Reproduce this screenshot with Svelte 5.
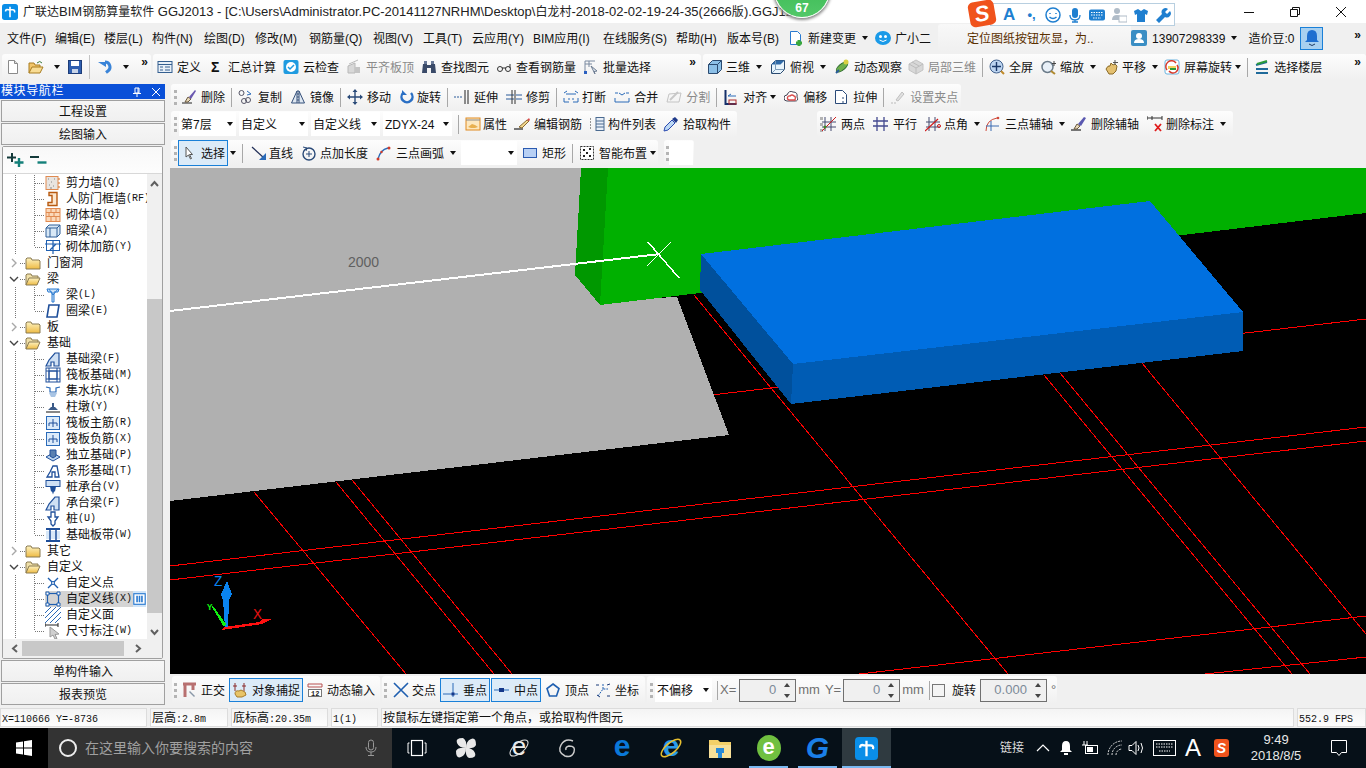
<script>
  const icons = {
    new: `<path d="M3.5 1.5h6l3 3v10h-9z" fill="#fff" stroke="#8a8a8a"/><path d="M9.5 1.5v3h3" fill="#ddd" stroke="#8a8a8a"/>`,
    open: `<path d="M1 14V4h5l1 2h5v2" fill="#f2c56a" stroke="#a87c20"/><path d="M1 14l3-6h11l-3 6z" fill="#f8dc94" stroke="#a87c20"/><path d="M9 4q3-3 5 0" fill="none" stroke="#3a7a3a"/>`,
    save: `<rect x="1.5" y="1.5" width="13" height="13" fill="#2f5fb0" stroke="#1c3c78"/><rect x="4" y="2" width="8" height="5" fill="#fff"/><rect x="5" y="10" width="6" height="4" fill="#c8d4e8"/>`,
    undo: `<path d="M8 3a5 5 0 0 1 3 9l-2 1.500" fill="none" stroke="#3a84d8" stroke-width="3"/><path d="M1 3h8v-1L9 8z" fill="#3a84d8"/>`,
    def: `<rect x="1" y="2.500" width="14" height="11" fill="#e8f0f8" stroke="#345f90"/><path d="M1 5.500h14M3 8h3M3 11h3M8 8h5M8 11h5" stroke="#345f90"/>`,
    sigma: `<text x="3" y="13" font-family="Liberation Sans" font-size="14" font-weight="700" fill="#111">Σ</text>`,
    cloud: `<rect x="0.500" y="1" width="15" height="14" rx="2" fill="#1f9be0"/><circle cx="8" cy="8" r="5" fill="#fff"/><path d="M5 8l2 2 4-4" fill="none" stroke="#1f9be0" stroke-width="1.500"/>`,
    flat: `<path d="M2 14V7l7-3v10z" fill="#d8d8d8" stroke="#b8b8b8"/><path d="M9 8h5v6H9z" fill="#c4c4c4"/><path d="M3 5l9-4" stroke="#bbb"/>`,
    find: `<path d="M2 5h4v9H1zM10 5h4l1 9h-5z" fill="#3a4a68"/><rect x="3" y="2" width="3" height="3" fill="#6a7a98"/><rect x="10" y="2" width="3" height="3" fill="#6a7a98"/><rect x="6" y="6" width="4" height="3" fill="#3a4a68"/>`,
    glasses: `<circle cx="4" cy="10" r="2.500" fill="none" stroke="#333"/><circle cx="12" cy="10" r="2.500" fill="none" stroke="#333"/><path d="M6 9h4M14 9V5" stroke="#333"/>`,
    batch: `<path d="M2 2h10M2 2v12M2 5h7M6 2v6" stroke="#7a8aa0" fill="none"/><rect x="1" y="12" width="3" height="3" fill="#2a5fc0"/><path d="M8 7l6 5-3 .5 1 2.500z" fill="#e8eef6" stroke="#6a7a90"/>`,
    cube: `<path d="M1.500 5.500l4-4h9v9l-4 4h-9z" fill="#8cc0e8" stroke="#2a4a70"/><path d="M1.500 5.500h9v9M10.500 5.500l4-4" fill="none" stroke="#2a4a70"/>`,
    cubetop: `<path d="M1.500 5.500l4-4h9v9l-4 4h-9z" fill="#e8f4fc" stroke="#2a4a70"/><path d="M1.500 5.500l4-4h9l-4 4z" fill="#2f6aa8"/><path d="M5.500 1.500v9h9M1.500 14.500l4-4" fill="none" stroke="#7a9ab8"/>`,
    orbit: `<ellipse cx="8" cy="8" rx="7" ry="3" transform="rotate(-40 8 8)" fill="#6fb04a" stroke="#2a6a2a"/><circle cx="12" cy="3" r="2.500" fill="#d8d040"/><path d="M2 14l3-3" stroke="#2a5a9a" stroke-width="2"/>`,
    part: `<path d="M8 1l7 4v6l-7 4-7-4V5z" fill="#d8d8d8" stroke="#c4c4c4"/><path d="M1 5l7 4 7-4M8 9v6M4 3l7 4" fill="none" stroke="#bcbcbc"/>`,
    full: `<circle cx="7.500" cy="7.500" r="6.500" fill="#bcd4f0" stroke="#40608c"/><path d="M7.500 3v9M3 7.500h9" stroke="#1a3868" stroke-width="1.400"/><path d="M12 12l3 3" stroke="#c08a2a" stroke-width="2"/>`,
    zoom: `<circle cx="6.500" cy="8" r="5.500" fill="#e8f0f8" stroke="#6a7a88" stroke-width="1.500"/><path d="M10 12l4 3" stroke="#b08a30" stroke-width="2"/><path d="M13 2v5M11 4.500h4" stroke="#444"/>`,
    pan: `<path d="M2 10q2-4 4-3l1-3 2 2 2-1 2 2-1 5-3 3H5z" fill="#e4c070" stroke="#8a6a28"/><path d="M11 1v5M9 3.500h5" stroke="#555"/>`,
    rot: `<rect x="1" y="1" width="14" height="14" rx="2" fill="#fff" stroke="#6ab4e0"/><path d="M3 11a5.500 5.500 0 0 1 9-7" fill="none" stroke="#d83a2a" stroke-width="1.500"/><path d="M13 6a5 5 0 0 1-8 6" fill="none" stroke="#d83a2a" stroke-width="1.500"/><rect x="4" y="7" width="8" height="3" fill="#f2d060"/><path d="M6 10h6" stroke="#2a9a3a" stroke-width="2"/>`,
    floors: `<path d="M2 6l11-3M2 10h12M2 14h12" stroke="#1f6a9a" stroke-width="2"/><path d="M3 5l10-3" stroke="#2a9a3a" stroke-width="2"/>`,
    del: `<path d="M1 14h10" stroke="#222"/><path d="M4 13l3-5 3 2-3 3z" fill="#e8d8b8" stroke="#6a5a40"/><path d="M8 8l6-7 1 1-5 8z" fill="#6a58b0"/>`,
    copy: `<circle cx="3.500" cy="4" r="2.500" fill="none" stroke="#556"/><circle cx="10" cy="11" r="2.500" fill="none" stroke="#556"/><circle cx="6" cy="12" r="2.500" fill="none" stroke="#556"/><path d="M9 2l4 3-4 1" fill="none" stroke="#2a6ab8"/>`,
    mirror: `<path d="M7 2L1.500 14H7zM9 2l5.500 12H9z" fill="#dfe8f2" stroke="#35507a"/><path d="M8 1v14" stroke="#35507a" stroke-dasharray="2 1"/>`,
    move: `<path d="M8 1v14M1 8h14" stroke="#2a4a78" stroke-width="1.400"/><path d="M8 0l2.500 3h-5zM8 16l2.500-3h-5zM0 8l3-2.500v5zM16 8l-3-2.500v5z" fill="#2a4a78"/>`,
    rotate: `<path d="M4 4a5.500 5.500 0 1 0 8 0" fill="none" stroke="#2a6fc4" stroke-width="2.500"/><path d="M3 1v5h5z" fill="#2a6fc4"/>`,
    extend: `<path d="M0 8h9" stroke="#2a5a9a" stroke-dasharray="2 1"/><path d="M11 1v14M14 1v14" stroke="#222"/>`,
    trim: `<path d="M0 6h8M0 10h8M10 6h6M10 10h6" stroke="#2a5a9a"/><path d="M6 1v14M9 1v14" stroke="#333"/>`,
    break: `<path d="M1 9v4h5M10 13h5V9M1 4l3-2M15 4l-3-2M3 5h10" fill="none" stroke="#2a6ab8"/><path d="M5 10h2M9 10h2" stroke="#2a6ab8"/>`,
    merge: `<path d="M1 9v4h14V9M5 4l3 2 3-2M1 4h3M12 4h3" fill="none" stroke="#2a6ab8"/>`,
    split: `<path d="M1 13h12l2-9-12 1z" fill="none" stroke="#c4c4c4"/><path d="M4 11l8-8" stroke="#c8c8c8" stroke-width="2"/>`,
    align: `<path d="M2.500 1v14h11" fill="none" stroke="#15306a" stroke-width="2"/><rect x="6" y="11" width="7" height="4" fill="none" stroke="#b02a2a"/><path d="M5 7h8M5 7l3-2" stroke="#2a6ab8"/>`,
    offset: `<path d="M3 12a3 3 0 0 1 0-6q2-5 6-3 5 0 4 5 2 4-2 4z" fill="#fff" stroke="#445"/><path d="M5 11a2 2 0 0 1 1-4q2-2 4 0 2 0 1 4z" fill="none" stroke="#d84a4a" stroke-width="1.300"/>`,
    stretch: `<path d="M2.500 1.500h7l4 4v9h-11z" fill="#fff" stroke="#2a4a78"/><path d="M10 8v2M10 12v2" stroke="#2a4a78"/>`,
    setgrip: `<path d="M1 14h5" stroke="#bbb" stroke-dasharray="2 1"/><path d="M6 11l6-8 2 2-6 7z" fill="#e0e0e0" stroke="#c0c0c0"/>`,
    prop: `<rect x="1" y="2" width="14" height="12" fill="#fde8c0" stroke="#e08a20"/><path d="M1 4h14" stroke="#8a8a8a"/><path d="M3 11l4-3 3 1 3 2-3 1H6z" fill="#e8b050"/>`,
    rebar: `<path d="M0 13h9" stroke="#222" stroke-width="1.200"/><path d="M5 11l8-7 2 1-7 7z" fill="#f2d890" stroke="#8a6a30"/><path d="M13 4l2-2 1 2-1 1z" fill="#d84a4a"/>`,
    list: `<path d="M1 3h2M1 6h2M1 9h2M1 12h2" stroke="#333" stroke-dasharray="1 1"/><rect x="7" y="1.500" width="8" height="13" fill="#e8eff8" stroke="#4a6a90"/><path d="M7 5h8M7 8h8M7 11h8" stroke="#4a6a90"/>`,
    pick: `<path d="M1 15l1-4 7-7 3 3-7 7z" fill="#bcd8f4" stroke="#2a4ab0"/><path d="M9 3l3-2 3 3-2 3z" fill="#1f3a8a"/>`,
    two: `<path d="M4 1v14M10 1v14M1 6h14M1 11h14" stroke="#444a70"/><path d="M1 15L15 1" stroke="#d01a1a"/><circle cx="4" cy="11" r="1.500" fill="#3a8a2a"/>`,
    par: `<path d="M4 1v14M11 1v14M0 5h15M0 10h15" stroke="#444a90" stroke-width="1.300"/>`,
    angle: `<path d="M4 1v14M10 1v14M1 6h14M1 11h14" stroke="#444a70"/><path d="M0 15L13 3" stroke="#d01a1a" stroke-width="1.200"/><circle cx="14" cy="10" r="1.500" fill="none" stroke="#d01a1a"/>`,
    arc3: `<path d="M1 15Q1 4 12 2" fill="none" stroke="#d04a3a"/><path d="M6 5v10M1 10h13" stroke="#3a6ab0"/><circle cx="13" cy="2" r="1.300" fill="#d04a3a"/>`,
    delaux: `<path d="M0 14h10" stroke="#222" stroke-width="1.200"/><path d="M3 13l3-5 3 2-3 3z" fill="#e8d8b8" stroke="#6a5a40"/><path d="M7 8l6-7 2 1-5 8z" fill="#5a58b0"/>`,
    delmark: `<path d="M0 2h15M0 0v4M15 0v4M5 0v4" stroke="#333" fill="none"/><path d="M8 8l6 7M14 8l-6 7" stroke="#e01a1a" stroke-width="1.800"/>`,
    sel: `<path d="M5 2v10l2.500-2 2 4 1-.5-2-4h3z" fill="#fff" stroke="#555"/>`,
    line: `<path d="M1 2l12 11" stroke="#222f58" stroke-width="1.200"/><path d="M15 8v7H8z" fill="#2a6ab8"/>`,
    plen: `<circle cx="8" cy="9" r="6" fill="none" stroke="#2a4a78" stroke-width="1.400"/><path d="M8 6v6M5 9h6" stroke="#2a4a78"/><path d="M2 2l4 1-1 3" fill="none" stroke="#2a4a78"/>`,
    arc: `<path d="M2 14Q4 5 12 3" fill="none" stroke="#2a6ab8" stroke-width="1.300"/><circle cx="2" cy="14" r="1.500" fill="#d03a2a"/><circle cx="13" cy="3" r="1.500" fill="#d03a2a"/><circle cx="5.500" cy="7" r="1.200" fill="#d03a2a"/>`,
    rect: `<rect x="1.500" y="3.500" width="13" height="9" fill="#b8d0f4" stroke="#2a5ab0"/>`,
    smart: `<rect x="1.500" y="1.500" width="13" height="13" fill="#fff" stroke="#333" stroke-dasharray="2 1"/><path d="M4 5h2M10 4h2M7 8h2M4 11h2M10 11h2" stroke="#222" stroke-width="2"/>`,
    ortho: `<path d="M2 2h13M4 2v13M12 2v6" stroke="#b87070" stroke-width="3" fill="none"/><path d="M9 9l5 5-1 1-5-5z" fill="#8a98a8"/>`,
    snap: `<path d="M3 1v8M12 1v8M1 4h4M10 4h4" stroke="#8a2a2a" fill="none"/><path d="M3 12q0-4 4-3l2-1 4 2 1 3-4 2H5z" fill="#e8c468" stroke="#a87c28"/>`,
    dyn: `<path d="M1 2v3h14V2M1 2h14" fill="none" stroke="#b85050"/><rect x="1.500" y="7.500" width="13" height="7" fill="#fff" stroke="#777"/><text x="4" y="14" font-family="Liberation Mono" font-size="7" font-weight="700" fill="#222">12</text>`,
    cross: `<path d="M1 1l14 14M15 1L1 15" stroke="#1f5fb0" stroke-width="1.600"/>`,
    perp: `<path d="M0 12h15M10 1v14" stroke="#2a6ab8"/><rect x="8.500" y="10.500" width="3" height="3" fill="#14388a"/>`,
    mid: `<path d="M0 8h15" stroke="#2a6ab8"/><rect x="5" y="6" width="5" height="4" fill="#14388a"/>`,
    vert: `<path d="M8 2l6 4.500-2.500 7.500h-7L2 6.500z" fill="none" stroke="#1f5fb0" stroke-width="1.600"/>`,
    coord: `<path d="M3 14l5-7 5 0M8 7v-5" stroke="#1f5fb0" fill="none" stroke-dasharray="2 1"/><path d="M1 3h3M2 13l3 2M12 14h3M12 3l3-1" stroke="#1a3a78"/>`,
    folder: `<path d="M1 14V4l1-1h4l1 2h7l1 1v8z" fill="url(#fy)" stroke="#8a7a50"/>`,
    folderopen: `<path d="M1 14V4l1-1h4l1 2h6v2" fill="#f0e0a8" stroke="#8a7a50"/><path d="M1 14l3-7h11l-3 7z" fill="url(#fy)" stroke="#8a7a50"/>`,
    shear: `<rect x="1" y="1.500" width="12" height="13" fill="#e8e4e0" stroke="#e08a50"/><path d="M3 4h1M6 7h1M4 10h1M8 11h1M9 4h1M5 13h2" stroke="#888"/><path d="M14 3v2M14 7v2M14 11v2" stroke="#d06a20"/>`,
    door: `<path d="M4 1.500h8v13H3v-3h4v-7H4z" fill="#fde8d0" stroke="#b85a10" stroke-width="1.400"/>`,
    brick: `<rect x="1" y="1.500" width="14" height="13" fill="#fbd8b8" stroke="#e08a50"/><path d="M1 5.500h14M1 9.500h14M6 1.500v4M11 1.500v4M4 5.500v4M9 5.500v4M6 9.500v5M11 9.500v5" stroke="#e08a50"/>`,
    hidden: `<path d="M1 5l3-3h11v9l-3 3H1z" fill="#d8e8f6" stroke="#2f5f98"/><path d="M1 5h11v9M12 5l3-3M5 5v9" fill="none" stroke="#2f5f98"/>`,
    wallbar: `<rect x="1.500" y="1.500" width="13" height="10" fill="#fff" stroke="#1f5fb0"/><path d="M0 5h16M8 1v14M5 11l6-6" stroke="#1f5fb0" stroke-width="1.200"/>`,
    beam: `<path d="M2 2h12l-1 3H9v10H7V5H3z" fill="#cfe4f8" stroke="#2a7ad0"/><path d="M4 2l4 6 5-6" fill="none" stroke="#2a7ad0"/>`,
    ring: `<path d="M4 2h10l-2 12H2z" fill="#fff" stroke="#1f4f9a" stroke-width="1.600"/>`,
    fbeam: `<path d="M1 15l3-6 6-7h4v13H9v-4H6v4z" fill="#cfe0f4" stroke="#1f4f9a" stroke-width="1.200"/>`,
    raft: `<rect x="1" y="1" width="14" height="14" fill="#fff" stroke="#1f4f9a"/><rect x="4" y="4" width="8" height="8" fill="none" stroke="#1f4f9a"/><path d="M1 4h14M1 12h14M4 1v14M12 1v14" stroke="#1f4f9a"/>`,
    pit: `<path d="M1 4l4 1v4h6V5l4-1" fill="none" stroke="#2a6ab8" stroke-width="1.200"/><path d="M4 10h8l-2 4H6z" fill="#a8c4e4"/>`,
    pier: `<path d="M1 13h14" stroke="#888" stroke-width="2"/><path d="M3 11h10l-3-3H6zM7 4h2v4H7z" fill="#3a5a88"/>`,
    rmain: `<rect x="1.500" y="1.500" width="13" height="13" fill="#dcebfa" stroke="#2a6ab8"/><path d="M8 4v8M4 8h8M4 8v3M12 8v3" fill="none" stroke="#1f4f9a"/>`,
    iso: `<path d="M1 10l7-4 7 4-7 4z" fill="#bcd4ee" stroke="#1f4f9a"/><path d="M5 3h6v6l-3 2-3-2z" fill="#5a80b0" stroke="#1f4f9a"/>`,
    strip: `<path d="M2 14l3-5 3-6h4l2 11h-4V9H7v5z" fill="#fff" stroke="#1f4f9a" stroke-width="1.300"/>`,
    cap: `<rect x="1" y="1.500" width="14" height="6" fill="#cfe0f4" stroke="#1f4f9a"/><path d="M5 7.500h6l-1 5H9l-1 3-1-3H6z" fill="#1f4f9a"/>`,
    pile: `<path d="M6 1h4v5h3l-3 4v3l-2 2-2-2v-3L3 6h3z" fill="#fff" stroke="#1f4f9a" stroke-width="1.300"/>`,
    bandf: `<path d="M1 2h14M1 14h14" stroke="#1f4f9a" stroke-width="2"/><rect x="1" y="4" width="14" height="8" fill="#d8e8f8"/><path d="M5 3v10M11 3v10" stroke="#1f4f9a" stroke-width="1.500"/>`,
    ptx: `<path d="M3 3l10 10M13 3L3 13" stroke="#1f5fb0" stroke-width="1.400"/><circle cx="8" cy="8" r="1.500" fill="#fff" stroke="#1f5fb0"/>`,
    linex: `<rect x="2.500" y="2.500" width="11" height="11" fill="none" stroke="#1f5fb0" stroke-width="1.200"/><path d="M1 1h3v3H1zM12 1h3v3h-3zM1 12h3v3H1zM12 12h3v3h-3z" fill="#fff" stroke="#1f5fb0"/>`,
    area: `<path d="M0 6l6-6M0 11L11 0M0 16L16 0M5 16L16 5M10 16l6-6" stroke="#2a6ab8"/>`,
    dimx: `<path d="M0 2h13M0 0v4M13 0v4" stroke="#222"/><path d="M5 4l9 7-4 .5 2 4-2 .5-2-4-3 2z" fill="#cfcfcf" stroke="#999"/>`,
    pane: `<rect x="1" y="1.500" width="14" height="13" fill="#fff" stroke="#2a7ad0" stroke-width="1.400"/><path d="M5 4v8M11 4v8M8 4v8" stroke="#2a7ad0" stroke-width="2"/>`,
    yellow: `<rect x="1" y="3" width="14" height="12" fill="#f8e040" stroke="#e0a000"/>`
  };

  const menu = [
    { l: "文件(F)", w: 48 }, { l: "编辑(E)", w: 49 }, { l: "楼层(L)", w: 48 }, { l: "构件(N)", w: 52 }, { l: "绘图(D)", w: 51 }, { l: "修改(M)", w: 54 }, { l: "钢筋量(Q)", w: 64 },
    { l: "视图(V)", w: 50 }, { l: "工具(T)", w: 49 }, { l: "云应用(Y)", w: 61 }, { l: "BIM应用(I)", w: 70 }, { l: "在线服务(S)", w: 73 }, { l: "帮助(H)", w: 51 }, { l: "版本号(B)", w: 61 }
  ];

  const bar1a = [
    { i: "def", l: "定义" }, { i: "sigma", l: "汇总计算" }, { i: "cloud", l: "云检查" },
    { i: "flat", l: "平齐板顶", dim: 1 }, { i: "find", l: "查找图元" }, { i: "glasses", l: "查看钢筋量" }, { i: "batch", l: "批量选择" }
  ];
  const bar1b = [
    { i: "cube", l: "三维", a: 2, t: -1 }, { i: "cubetop", l: "俯视", a: 2 }, { i: "orbit", l: "动态观察" },
    { i: "part", l: "局部三维", dim: 1, m: -2 }, { sep: 1 }, { i: "full", l: "全屏" }, { i: "zoom", l: "缩放", a: 2, t: -1 },
    { i: "pan", l: "平移", a: 2, t: -2 }, { i: "rot", l: "屏幕旋转", a: 1, m: -2 }, { sep: 1 }, { i: "floors", l: "选择楼层" }
  ];
  const bar2 = [
    { grip: 1 }, { i: "del", l: "删除" }, { sep: 1 }, { i: "copy", l: "复制" }, { i: "mirror", l: "镜像" }, { sep: 1 },
    { i: "move", l: "移动" }, { i: "rotate", l: "旋转", t: -2 }, { sep: 1 }, { i: "extend", l: "延伸" }, { i: "trim", l: "修剪" }, { sep: 1 },
    { i: "break", l: "打断", t: -1 }, { i: "merge", l: "合并" }, { i: "split", l: "分割", dim: 1 }, { sep: 1 },
    { i: "align", l: "对齐", a: 1 }, { i: "offset", l: "偏移", t: -1 }, { i: "stretch", l: "拉伸", m: -2 }, { sep: 1 }, { i: "setgrip", l: "设置夹点", dim: 1 }
  ];
  const combos = [{ l: "第7层", w: 57 }, { l: "自定义", w: 69 }, { l: "自定义线", w: 69 }, { l: "ZDYX-24", w: 69 }];
  const bar3a = [
    { sep: 1 }, { i: "prop", l: "属性", t: -2 }, { i: "rebar", l: "编辑钢筋" }, { i: "list", l: "构件列表", t: -1 }, { i: "pick", l: "拾取构件" }
  ];
  const bar3b = [
    { grip: 1 }, { i: "two", l: "两点" }, { i: "par", l: "平行" }, { i: "angle", l: "点角", a: 2, t: -1 },
    { i: "arc3", l: "三点辅轴", a: 2, m: -3 }, { i: "delaux", l: "删除辅轴", m: -2 }, { i: "delmark", l: "删除标注", a: 2, t: -1 }
  ];
  const bar4 = [
    { grip: 1 }, { i: "sel", l: "选择", on: 1 }, { caret: 1, m: -3 }, { sep: 1 }, { i: "line", l: "直线", m: 2, t: -2 }, { i: "plen", l: "点加长度", t: -1 },
    { i: "arc", l: "三点画弧", a: 2 }
  ];
  const bar4b = [{ i: "rect", l: "矩形" }, { sep: 1 }, { i: "smart", l: "智能布置", a: 1 }];
  const bot1 = [
    { grip: 1 }, { i: "ortho", l: "正交" }, { i: "snap", l: "对象捕捉", on: 1, m: -4 }, { i: "dyn", l: "动态输入", m: -1 }
  ];
  const bot2 = [
    { grip: 1 }, { i: "cross", l: "交点", t: -1 }, { i: "perp", l: "垂点", on: 1, m: -4 }, { i: "mid", l: "中点", on: 1, m: -4 }, { i: "vert", l: "顶点", m: -1 }, { i: "coord", l: "坐标", m: -2 }
  ];

  const leaf = (t, k, i, extra = {}) => ({ t, k, i, ...extra });
  const top = (t, open) => ({ t, top: 1, open });
  const tree = [
    leaf("剪力墙", "(Q)", "shear"), leaf("人防门框墙", "(RF)", "door"), leaf("砌体墙", "(Q)", "brick"), leaf("暗梁", "(A)", "hidden"), leaf("砌体加筋", "(Y)", "wallbar", { last: 1 }),
    top("门窗洞"), top("梁", 1), leaf("梁", "(L)", "beam"), leaf("圈梁", "(E)", "ring", { last: 1 }), top("板"), top("基础", 1),
    leaf("基础梁", "(F)", "fbeam"), leaf("筏板基础", "(M)", "raft"), leaf("集水坑", "(K)", "pit"), leaf("柱墩", "(Y)", "pier"), leaf("筏板主筋", "(R)", "rmain"), leaf("筏板负筋", "(X)", "rmain"),
    leaf("独立基础", "(P)", "iso"), leaf("条形基础", "(T)", "strip"), leaf("桩承台", "(V)", "cap"), leaf("承台梁", "(F)", "fbeam"), leaf("桩", "(U)", "pile"), leaf("基础板带", "(W)", "bandf", { last: 1 }),
    top("其它"), top("自定义", 1), leaf("自定义点", "", "ptx"), leaf("自定义线", "(X)", "linex", { sel: 1 }), leaf("自定义面", "", "area"), leaf("尺寸标注", "(W)", "dimx", { last: 1 }),
    top("CAD识别")
  ];
  const status = [
    { k: "X=110666 Y=-8736", w: 147 }, { c: "层高", k: ":2.8m", w: 78 }, { c: "底标高", k: ":20.35m", w: 97 }, { k: "1(1)", w: 47 },
    { c: "按鼠标左键指定第一个角点，或拾取构件图元", w: 913 }, { k: "552.9 FPS", w: 69 }
  ];
  const redLines = [
    [170, 566, 1366, 427], [170, 580, 1366, 441], [694, 397, 1366, 319], [859, 674, 1366, 616], [1205, 674, 1366, 657],
    [254, 492, 406, 674], [336, 482, 494, 674], [352, 480, 512, 674], [694, 295, 1008, 674],
    [1044, 375, 1292, 674], [1060, 373, 1310, 674], [1142, 363, 1366, 634]
  ];
</script>

{#snippet ico(name)}
  <svg class="ico" viewBox="0 0 16 16">{@html icons[name]}</svg>
{/snippet}

{#snippet items(list)}
  {#each list as t}
    {#if t.sep}
      <i class="sep"></i>
    {:else if t.grip}
      <i class="grip"></i>
    {:else if t.caret}
      <i class="caret" style:margin-left="{t.m}px"></i>
    {:else}
      <span class="tool" class:dim={t.dim} class:on={t.on} style:margin-left={t.m !== undefined ? `${t.m}px` : null}>
        {@render ico(t.i)}
        <span class="lab" style:margin-left={t.t ? `${t.t}px` : null}>{t.l}</span>
        {#if t.a}<i class="caret" class:wide={t.a === 2}></i>{/if}
      </span>
    {/if}
  {/each}
{/snippet}

{#snippet spin(v, w)}
  <span class="spin" style:width="{w}px">
    <span class="val">{v}</span>
    <span class="arrows"><i class="up"></i><i class="dn"></i></span>
  </span>
{/snippet}

<svg width="0" height="0" class="defs">
  <defs>
    <linearGradient id="fy" x1="0" y1="0" x2="0" y2="1"><stop offset="0" stop-color="#fdf2c0" /><stop offset="1" stop-color="#eebb44" /></linearGradient>
  </defs>
</svg>

<div class="app">
  <header class="title">
    <svg class="logo" viewBox="0 0 18 18">
      <rect width="18" height="18" rx="3" fill="#0a8ee8" />
      <path d="M9 3v12M4 8.500q0-3 3-2l5 0q3 0 2 3" fill="none" stroke="#fff" stroke-width="1.800" />
    </svg>
    <span class="title-text"><span class="cn">广联达</span>BIM<span class="cn">钢筋算量软件</span> GGJ2013 - [C:\Users\Administrator.PC-20141127NRHM\Desktop\<span class="cn">白龙村</span>-2018-02-02-19-24-35(2666<span class="cn">版</span>).GGJ12</span>
    <span class="winbtns">
      <svg width="12" height="12" viewBox="0 0 12 12"><path d="M1 6.500h10" stroke="#111" /></svg>
      <svg width="12" height="12" viewBox="0 0 12 12"><path d="M1.500 3.500h7v7h-7zM3.500 3V1.500h7v7H9" fill="none" stroke="#111" /></svg>
      <svg width="12" height="12" viewBox="0 0 12 12"><path d="M1 1l10 10M11 1L1 11" stroke="#111" /></svg>
    </span>
  </header>

  <div class="badge"><span>67</span></div>

  <div class="ime">
    <span class="ime-logo"><b>S</b></span>
    <span class="ime-a">A</span>
    <span class="ime-dot">•,</span>
    <svg viewBox="0 0 16 16" width="16" height="16"><circle cx="8" cy="8" r="7" fill="none" stroke="#1f7fd0" stroke-width="1.500" /><path d="M5 6v1M11 6v1M4.500 10q3.500 3 7 0" fill="none" stroke="#1f7fd0" stroke-width="1.500" /></svg>
    <svg viewBox="0 0 16 16" width="16" height="16"><rect x="5" y="1" width="6" height="10" rx="3" fill="#1f7fd0" /><path d="M3 8q0 5 5 5t5-5M8 13v2M5 15h6" fill="none" stroke="#1f7fd0" stroke-width="1.300" /></svg>
    <svg viewBox="0 0 16 16" width="16" height="16"><rect y="2.500" width="16" height="11" rx="2" fill="#1f7fd0" /><path d="M2 5.500h12M2 8h12M4 11h8" stroke="#fff" stroke-dasharray="1.500 1" /></svg>
    <svg viewBox="0 0 16 16" width="16" height="16"><circle cx="6" cy="4" r="3" fill="#b0bcc8" /><path d="M1 13q0-5 5-5t5 5z" fill="#b0bcc8" /><rect x="8" y="9" width="8" height="6" fill="#fff" stroke="#b0bcc8" /></svg>
    <svg viewBox="0 0 16 16" width="16" height="16"><path d="M5 2L1 4l1 4 2-1v8h8V7l2 1 1-4-4-2-3 2z" fill="#1f7fd0" /></svg>
    <svg viewBox="0 0 16 16" width="16" height="16"><path d="M1 13l6-6a4 4 0 0 1 6-5l-3 3 2 2 3-3a4 4 0 0 1-5 6l-6 6z" fill="#1f7fd0" /></svg>
  </div>

  <nav class="menubar">
    <span class="menus">{#each menu as m}<span style:width="{m.w}px">{m.l}</span>{/each}</span>
    <span class="tool">
      <svg class="ico" viewBox="0 0 16 16"><path d="M2.500 1.500h7l3 3v10h-10z" fill="#fff" stroke="#2a7ad0" /><path d="M8 13h6M11 10v6" stroke="#3aa83a" stroke-width="3" /></svg>
      <span class="lab">新建变更</span><i class="caret wide"></i>
    </span>
    <span class="tool small">
      <svg class="ico" viewBox="0 0 16 16"><ellipse cx="8" cy="8" rx="8" ry="7" fill="#1a9ae8" /><circle cx="5.500" cy="6.500" r="1.500" fill="#fff" /><circle cx="10.500" cy="6.500" r="1.500" fill="#fff" /><path d="M4.500 10q3.500 3 7 0" stroke="#fff" fill="none" /></svg>
      <span class="lab">广小二</span>
    </span>
    <span class="notice">定位图纸按钮灰显，为..</span>
    <svg class="ico" viewBox="0 0 16 16"><rect width="16" height="16" rx="2" fill="#3a8ec4" /><circle cx="8" cy="6" r="3" fill="#fff" /><path d="M3 13q0-4 5-4t5 4z" fill="#fff" /></svg>
    <span class="phone">13907298339</span><i class="caret wide"></i>
    <span class="beans">造价豆:0</span>
    <span class="bell">
      <svg width="16" height="18" viewBox="0 0 16 18"><path d="M8 1q5 0 5 6v4l2 2H1l2-2V7q0-6 5-6z" fill="#1f6fd0" /><path d="M5 15q3 3 6 0" fill="none" stroke="#1f3a60" /></svg>
    </span>
    <span class="more">»</span>
  </nav>

  <div class="toolbar-top">
    <div class="band first">
      {@render ico("new")}
      {@render ico("open")}
      <i class="caret"></i>
      {@render ico("save")}
      <i class="sep tall"></i>
      {@render ico("undo")}
      <i class="caret"></i>
      <span class="more">»</span>
    </div>
    <div class="band second">{@render items(bar1a)}<span class="more">»</span></div>
    <div class="band third">{@render items(bar1b)}<span class="more">»</span></div>
  </div>

  <main class="main">
    <aside class="side">
      <div class="side-head">
        <span>模块导航栏</span>
        <svg width="10" height="10" viewBox="0 0 10 10"><path d="M3 1h4v5H3zM1 6.500h8M5 6.500V10M6 1v5" fill="none" stroke="#fff" /></svg>
        <svg width="10" height="10" viewBox="0 0 10 10"><path d="M1 1l8 8M9 1L1 9" stroke="#fff" /></svg>
      </div>
      <button class="side-btn">工程设置</button>
      <button class="side-btn">绘图输入</button>
      <div class="panel">
        <div class="panel-top">
          <svg width="17" height="14" viewBox="0 0 17 14"><path d="M5 0v9M0 4.500h9" stroke="#143a3a" stroke-width="2" /><path d="M12 5v9M7.500 9.500h9" stroke="#14807a" stroke-width="2.400" /></svg>
          <svg width="17" height="14" viewBox="0 0 17 14"><path d="M0 4h9" stroke="#143a3a" stroke-width="2" /><path d="M7.500 9.500h9" stroke="#14807a" stroke-width="2.400" /></svg>
        </div>
        <div class="tree-wrap">
          <div class="tree">
            {#each tree as r}
              <div class="row">
                {#if r.top}
                  <svg class="guide-top" viewBox="0 0 25 16">
                    {#if r.open}
                      <path d="M10 6l4 4 4-4" fill="none" stroke="#444" stroke-width="1.400" />
                    {:else}
                      <path d="M12 4l4 4-4 4" fill="none" stroke="#a8a8a8" stroke-width="1.400" />
                    {/if}
                    <path d="M20 8.500h5" stroke="#777" stroke-dasharray="1 1" />
                  </svg>
                  {@render ico(r.open ? "folderopen" : "folder")}
                  <span class="name top-name">{r.t}</span>
                  {#if r.t === "CAD识别"}
                    {@render ico("pane")}
                    {@render ico("yellow")}
                  {/if}
                {:else}
                  <svg class="guide" viewBox="0 0 45 16">
                    <path d="M15.500 0v16" stroke="#777" stroke-dasharray="1 1" />
                    <path d="M34.500 0v{r.last ? 8 : 16}M35 8.500h10" stroke="#777" stroke-dasharray="1 1" />
                  </svg>
                  <span class="leaf" class:sel={r.sel}>
                    {@render ico(r.i)}
                    <span class="name">{r.t}</span><span class="key">{r.k}</span>
                    {#if r.sel}<svg class="ico pane" viewBox="0 0 16 16">{@html icons.pane}</svg>{/if}
                  </span>
                {/if}
              </div>
            {/each}
          </div>
          <div class="vscroll">
            <svg width="15" height="12" class="up-arrow" viewBox="0 0 15 12"><path d="M4 8l3.500-4 3.500 4" fill="none" stroke="#606060" stroke-width="2" /></svg>
            <i class="thumb-v"></i>
            <svg width="15" height="12" class="down-arrow" viewBox="0 0 15 12"><path d="M4 4l3.500 4 3.500-4" fill="none" stroke="#606060" stroke-width="2" /></svg>
          </div>
        </div>
        <div class="hscroll">
          <svg width="12" height="15" viewBox="0 0 12 15"><path d="M8 4L4 7.500 8 11" fill="none" stroke="#606060" stroke-width="2" /></svg>
          <i class="thumb-h"></i>
          <svg width="12" height="15" viewBox="0 0 12 15"><path d="M4 4l4 3.500L4 11" fill="none" stroke="#606060" stroke-width="2" /></svg>
        </div>
      </div>
      <button class="side-btn">单构件输入</button>
      <button class="side-btn">报表预览</button>
    </aside>

    <section class="work">
      <div class="tb row2"><div class="band b2">{@render items(bar2)}</div></div>
      <div class="tb row3">
        <div class="band b3a">
          <i class="grip"></i>
          {#each combos as c}
            <span class="combo" style:width="{c.w}px"><span>{c.l}</span><i class="caret"></i></span>
          {/each}
          {@render items(bar3a)}
        </div>
        <div class="band b3b">{@render items(bar3b)}</div>
      </div>
      <div class="tb row4">
        <div class="band b4">
          {@render items(bar4)}
          <span class="combo" style:width="56px"><span></span><i class="caret"></i></span>
          {@render items(bar4b)}
        </div>
        <div class="band b4x"><i class="grip"></i><span class="blank-box"></span></div>
      </div>

      <svg class="canvas" viewBox="170 168 1196 506">
        <rect x="170" y="168" width="1196" height="506" fill="#000" />
        <g stroke="#ff0000" stroke-width="1" fill="none" shape-rendering="crispEdges">
          {#each redLines as l}
            <line x1={l[0]} y1={l[1]} x2={l[2]} y2={l[3]} />
          {/each}
        </g>
        <g shape-rendering="crispEdges">
          <polygon points="170,168 608,168 608,300 677,297 729,435 170,501" fill="#b0b0b0" />
          <polygon points="608,168 1366,168 1366,213 600,305" fill="#00b000" />
          <polygon points="581,168 608,168 600,305 575,275" fill="#009800" />
          <polygon points="701,254 1150,201 1243,312 793,364" fill="#0070e0" />
          <polygon points="701,254 793,364 791,404 700,290" fill="#00509c" />
          <polygon points="793,364 1243,312 1243,351 791,404" fill="#005cb4" />
        </g>
        <text x="348" y="267" class="dim-text">2000</text>
        <g stroke="#fff" fill="none" shape-rendering="crispEdges">
          <line x1="170" y1="311" x2="660" y2="254" stroke-width="2" />
          <line x1="648" y1="242" x2="679" y2="278" stroke-width="1.500" />
          <line x1="647" y1="266" x2="671" y2="242" stroke-width="1" />
        </g>
        <g shape-rendering="crispEdges">
          <polygon points="225,628 223,600 221,594 227,581 232,594 229,600 228,628" fill="#0a84f0" />
          <polygon points="224,627 260,622 262,619 272,619 262,624 222,630" fill="#ff1010" />
          <polygon points="224,627 213,609 212,606 216,610 226,624" fill="#10f010" />
          <text x="214" y="586" class="ax ax-z">Z</text>
          <text x="253" y="619" class="ax ax-x">X</text>
          <text x="207" y="610" class="ax ax-y">Y</text>
        </g>
      </svg>

      <div class="tb bottom">
        <div class="band bb1">{@render items(bot1)}</div>
        <div class="band bb2">{@render items(bot2)}</div>
        <div class="band bb3">
          <i class="grip"></i>
          <span class="combo" style:width="57px"><span>不偏移</span><i class="caret"></i></span>
          <i class="sep"></i>
          <span class="gray x">X=</span>{@render spin("0", 57)}<span class="gray">mm</span>
          <span class="gray y">Y=</span>{@render spin("0", 57)}<span class="gray">mm</span>
          <i class="sep"></i>
          <i class="check"></i>
          <span class="rot-label">旋转</span>{@render spin("0.000", 67)}<span class="gray deg">°</span>
        </div>
      </div>
    </section>
  </main>

  <footer class="status">
    {#each status as s}
      <span class="cell" style:width="{s.w}px">{s.c ?? ""}<span class="key">{s.k ?? ""}</span></span>
    {/each}
  </footer>

  <div class="taskbar">
    <span class="win">
      <svg width="16" height="16" viewBox="0 0 16 16"><path d="M0 2.500l7-1v6H0zM8 1.300L16 0v7.500H8zM0 8.500h7v6l-7-1zM8 8.500h8V16l-8-1.300z" fill="#fff" /></svg>
    </span>
    <span class="search">
      <svg width="20" height="20" viewBox="0 0 20 20"><circle cx="10" cy="10" r="8" fill="none" stroke="#eee" stroke-width="2" /></svg>
      <span class="search-text">在这里输入你要搜索的内容</span>
      <svg width="14" height="18" viewBox="0 0 14 18"><rect x="4.500" y="1" width="5" height="10" rx="2.500" fill="none" stroke="#999" /><path d="M2 8q0 5 5 5t5-5M7 13v3M4 16.500h6" fill="none" stroke="#999" /></svg>
    </span>
    <span class="apps">
      <span class="app-slot first-slot"><svg width="20" height="16" viewBox="0 0 20 16"><rect x="4.500" y="0.500" width="11" height="15" fill="none" stroke="#fff" stroke-width="1.200" /><path d="M2.500 3H1v10h1.500M17.500 3H19v10h-1.500" fill="none" stroke="#fff" /></svg></span>
      <span class="app-slot"><svg width="22" height="22" viewBox="0 0 22 22"><path d="M11 11Q4 11 2 6T8 1q4 2 3 10zM11 11q0-7 5-9t5 6q-2 4-10 3zM11 11q7 0 9 5t-6 5q-4-2-3-10zM11 11q0 7-5 9t-5-6q2-4 10-3z" fill="#e8e8e8" /></svg></span>
      <span class="app-slot shift-a">
        <svg width="24" height="26" viewBox="0 0 24 26"><text x="12" y="20" text-anchor="middle" class="tb-e" fill="#eee">e</text><ellipse cx="12" cy="13" rx="11" ry="5" transform="rotate(-40 12 13)" fill="none" stroke="#ddd" /></svg>
      </span>
      <span class="app-slot"><svg width="20" height="20" viewBox="0 0 20 20"><path d="M15 3Q7 0 3 7t4 11q7 2 9-4t-5-6q-4 1-3 4" fill="none" stroke="#ccc" stroke-width="1.500" /></svg></span>
      <span class="app-slot shift-b">
        <svg width="24" height="26" viewBox="0 0 24 26"><text x="12" y="21" text-anchor="middle" class="tb-e strong" fill="#0a78d8">e</text></svg>
      </span>
      <span class="app-slot">
        <svg width="26" height="26" viewBox="0 0 26 26"><text x="13" y="21" text-anchor="middle" class="tb-e strong" fill="#2a9ae8">e</text><ellipse cx="13" cy="13" rx="12" ry="5" transform="rotate(-40 13 13)" fill="none" stroke="#e8c030" stroke-width="1.500" /></svg>
      </span>
      <span class="app-slot"><svg width="22" height="20" viewBox="0 0 22 20"><path d="M0 2h9l2 2h11v16H0z" fill="#f4d068" /><rect x="0" y="7" width="22" height="13" fill="#f8e098" /><rect x="7" y="10" width="8" height="5" fill="#2a8ad8" /><rect x="9" y="13" width="4" height="7" fill="#2a8ad8" /></svg></span>
      <span class="app-slot run"><span class="green-e">e</span></span>
      <span class="app-slot run"><span class="blue-g">G</span></span>
      <span class="app-slot run active">
        <svg width="23" height="23" viewBox="0 0 18 18"><rect width="18" height="18" rx="3" fill="#0a8ee8" /><path d="M9 3v12M4 8.500q0-3 3-2l5 0q3 0 2 3" fill="none" stroke="#fff" stroke-width="1.800" /></svg>
      </span>
    </span>
    <span class="tray">
      <span class="link">链接</span>
      <svg width="14" height="10" viewBox="0 0 14 10"><path d="M1 8l6-6 6 6" fill="none" stroke="#fff" stroke-width="1.200" /></svg>
      <svg width="14" height="16" viewBox="0 0 14 16"><path d="M7 1q4 0 4 5v4l2 2H1l2-2V6q0-5 4-5z" fill="#fff" /><rect x="5" y="13" width="4" height="2" fill="#fff" /></svg>
      <svg width="18" height="14" viewBox="0 0 18 14"><rect x="3.500" y="4.500" width="12" height="8" fill="none" stroke="#fff" /><rect x="5" y="6" width="6" height="5" fill="#fff" /><path d="M2 0v4M5 0v4M0 4h6" stroke="#fff" /></svg>
      <svg class="wifi" width="18" height="16" viewBox="0 0 18 16"><path d="M1 15A14 14 0 0 1 15 1M5 15A10 10 0 0 1 15 5M9 15a6 6 0 0 1 6-6" fill="none" stroke="#ddd" stroke-dasharray="2 1" /></svg>
      <svg class="vol" width="16" height="16" viewBox="0 0 16 16"><path d="M1 5.500h3l4-4v13l-4-4H1z" fill="none" stroke="#fff" /><path d="M10 5q2 3 0 6M13 3q3 5 0 10" fill="none" stroke="#fff" /></svg>
      <svg width="23" height="16" viewBox="0 0 23 16"><rect x="0.500" y="0.500" width="22" height="15" fill="none" stroke="#fff" /><path d="M3 4h17M3 7h17M6 11h11" stroke="#fff" stroke-dasharray="1.500 1" /></svg>
      <span class="tray-a">A</span>
      <span class="tray-s"><b>S</b></span>
    </span>
    <span class="clock"><span>9:49</span><span>2018/8/5</span></span>
    <span class="notify"><svg width="16" height="17" viewBox="0 0 16 17"><path d="M.5.500h15v12h-5l-2.500 3-2.500-3h-5z" fill="none" stroke="#fff" /></svg></span>
  </div>
</div>

<style>
  :global(body) {
    margin: 0;
    background: #f0f0f0;
  }

  .defs {
    position: absolute;
  }

  .app {
    position: relative;
    width: 1366px;
    height: 768px;
    overflow: hidden;
    display: flex;
    flex-direction: column;
    background: #f0f0f0;
    color: #111;
    font: 12px/16px "Liberation Sans", "Noto Sans CJK SC", sans-serif;
  }

  i {
    display: block;
    font-style: normal;
  }

  svg {
    display: block;
    flex: none;
  }

  .title {
    height: 23px;
    flex: none;
    display: flex;
    align-items: center;
    background: #fff;
    font-size: 13px;
    padding-left: 2px;
    box-sizing: border-box;
  }

  .logo {
    width: 16px;
    height: 16px;
  }

  .title-text {
    margin-left: 5px;
    white-space: nowrap;
    color: #222;
  }

  .cn {
    font-size: 12px;
  }

  .winbtns {
    margin-left: auto;
    display: flex;
    gap: 34px;
    padding-right: 19px;
  }

  .badge {
    position: absolute;
    left: 774px;
    top: -38px;
    width: 56px;
    height: 56px;
    border-radius: 50%;
    background: linear-gradient(#2fb24a, #52c868);
    border: 1px solid #fff;
    box-shadow: 0 1px 3px 1px #888;
    box-sizing: border-box;
    color: #fff;
    font: 700 12px/14px "Liberation Sans", sans-serif;
    text-align: center;
  }

  .badge span {
    display: block;
    margin-top: 38px;
  }

  .ime {
    position: absolute;
    left: 990px;
    top: 3px;
    width: 185px;
    height: 23px;
    box-sizing: border-box;
    background: #fff;
    border: 1px solid #b8cfe0;
    display: flex;
    align-items: center;
    gap: 6px;
    padding-left: 12px;
  }

  .ime-logo {
    position: absolute;
    left: -22px;
    top: -3px;
    width: 26px;
    height: 25px;
    border-radius: 5px;
    background: #f0531c;
    transform: rotate(-10deg);
    color: #fff;
    text-align: center;
    font: italic 700 22px/25px "Liberation Sans", sans-serif;
  }

  .ime-a {
    color: #1f7fd0;
    font: 700 17px/20px "Liberation Sans", sans-serif;
    width: 15px;
  }

  .ime-dot {
    color: #1f7fd0;
    font: 700 13px/16px "Liberation Sans", sans-serif;
    width: 15px;
    text-align: center;
  }

  .menubar {
    height: 30px;
    flex: none;
    display: flex;
    align-items: center;
    padding-left: 7px;
    white-space: nowrap;
    background: #f0f0f0;
  }

  .menus {
    display: flex;
    padding-top: 2px;
  }

  .tool {
    display: flex;
    align-items: center;
    white-space: nowrap;
    color: #111;
  }

  .tool .ico {
    margin-right: 4px;
  }

  .lab {
    padding-top: 2px;
  }

  .ico {
    width: 16px;
    height: 16px;
  }

  .small {
    margin-left: 7px;
  }

  .notice {
    margin-left: 7px;
    padding-left: 29px;
    height: 28px;
    line-height: 30px;
    box-sizing: border-box;
    width: 193px;
    background: linear-gradient(#f8f8f8, #f0f0f0);
    border-radius: 3px;
    color: #5a3000;
  }

  .phone {
    margin-left: 5px;
    padding-top: 2px;
  }

  .beans {
    margin-left: 11px;
    padding-top: 2px;
  }

  .bell {
    margin-left: 6px;
    width: 21px;
    height: 21px;
    border: 1px solid #1a80d8;
    background: #a8d0f0;
    display: flex;
    align-items: center;
    justify-content: center;
  }

  .more {
    margin-left: auto;
    margin-right: 5px;
    align-self: flex-start;
    margin-top: 2px;
    font: 700 12px/12px "Liberation Sans", sans-serif;
  }

  .menubar .more {
    margin-top: 6px;
  }

  .toolbar-top {
    height: 28px;
    flex: none;
    display: flex;
    padding-top: 1px;
    box-sizing: border-box;
    gap: 2px;
  }

  .band {
    display: flex;
    align-items: center;
    height: 26px;
    gap: 8px;
    box-sizing: border-box;
    border-radius: 3px;
    background: linear-gradient(#fdfdfd, #f0f0f0);
  }

  .first {
    width: 149px;
    margin-left: 2px;
    padding-left: 3px;
    gap: 7px;
  }

  .first .more {
    margin-right: 3px;
  }

  .first .tall {
    height: 24px;
    margin: 0 0 0 -1px;
    background: #c4c4c4;
  }

  .second {
    width: 548px;
    padding-left: 4px;
    gap: 7px;
  }

  .third {
    flex: 1;
    padding-left: 4px;
  }

  .sep {
    width: 1px;
    height: 19px;
    background: #a8a8a8;
    margin: 0 -2px;
    flex: none;
  }

  .grip {
    width: 0;
    height: 15px;
    border-left: 3px dotted #b4b4b4;
    margin-right: -4px;
    flex: none;
  }

  .caret {
    width: 0;
    height: 0;
    border: 3.500px solid transparent;
    border-top: 4px solid #111;
    border-bottom: 0;
    margin-left: 3px;
    flex: none;
  }

  .caret.wide {
    margin-left: 6px;
  }

  .dim .lab {
    color: #8a8a8a;
  }

  .on {
    box-shadow: 0 0 0 1px #1a80d8 inset;
    background: #dcebf8;
    padding: 4px 3px;
    margin: 0 -3px;
  }

  .side {
    width: 170px;
    flex: none;
    display: flex;
    flex-direction: column;
    padding: 3px 5px 2px 0;
    box-sizing: border-box;
    gap: 1px;
  }

  .main {
    flex: 1;
    min-height: 0;
    display: flex;
  }

  .side-head {
    height: 15px;
    flex: none;
    background: #0a50d8;
    color: #fff;
    display: flex;
    align-items: center;
    gap: 9px;
    padding: 0 4px 0 1px;
    letter-spacing: 0.600px;
    line-height: 15px;
  }

  .side-head span {
    margin-right: auto;
  }

  .side-btn {
    height: 22px;
    margin: 0 0 0 1px;
    padding: 2px 0 0;
    flex: none;
    background: linear-gradient(#f6f6f6, #f0f0f0);
    border: 1px solid #a0a0a0;
    font: inherit;
    color: #111;
    text-align: center;
  }

  .panel {
    flex: 1;
    min-height: 0;
    margin-left: 2px;
    border: 1px solid #a0a0a0;
    border-radius: 2px;
    background: #fff;
    display: flex;
    flex-direction: column;
    width: 161px;
    box-sizing: border-box;
  }

  .panel-top {
    height: 27px;
    flex: none;
    display: flex;
    gap: 6px;
    padding: 6px 0 0 4px;
    box-sizing: border-box;
    background: linear-gradient(#f8f8f8, #fdfdfd);
    border-bottom: 1px solid #d8d8d8;
  }

  .tree-wrap {
    flex: 1;
    min-height: 0;
    display: flex;
  }

  .tree {
    flex: 1;
    min-width: 0;
    overflow: hidden;
    margin-left: -3px;
    padding-top: 1px;
  }

  .row {
    height: 16px;
    display: flex;
    align-items: center;
    white-space: nowrap;
  }

  .guide {
    width: 45px;
    height: 16px;
  }

  .guide-top {
    width: 25px;
    height: 16px;
  }

  .leaf {
    display: flex;
    align-items: center;
    height: 16px;
  }

  .leaf.sel {
    background: #d4d4d4;
  }

  .leaf .ico {
    margin-right: 5px;
  }

  .leaf .pane {
    margin: 0 0 0 1px;
    width: 13px;
    background: #cfe4f8;
  }

  .top-name {
    margin-left: 6px;
    margin-right: 47px;
  }

  .key {
    font: 10px/16px "Liberation Mono", monospace;
  }

  .vscroll {
    width: 15px;
    flex: none;
    background: #f0f0f0;
    display: flex;
    flex-direction: column;
    align-items: center;
  }

  .up-arrow {
    margin-top: 4px;
  }

  .thumb-v {
    width: 15px;
    height: 314px;
    background: #c8c8c8;
    margin-top: 109px;
  }

  .down-arrow {
    margin-top: 13px;
  }

  .hscroll {
    height: 19px;
    flex: none;
    background: #f0f0f0;
    display: flex;
    align-items: center;
    padding-left: 6px;
  }

  .thumb-h {
    width: 102px;
    height: 15px;
    background: #c8c8c8;
    margin: 0 8px 0 1px;
  }

  .work {
    flex: 1;
    min-width: 0;
    display: flex;
    flex-direction: column;
  }

  .tb {
    flex: none;
    display: flex;
  }

  .row2 {
    margin-top: 3px;
  }

  .row3 {
    margin-top: 1px;
  }

  .row4 {
    margin-top: 3px;
    margin-bottom: 2px;
  }

  .b2 {
    margin-left: 1px;
    width: 790px;
    padding-left: 3px;
  }

  .b3a {
    margin-left: 1px;
    width: 566px;
    padding-left: 3px;
    gap: 3px;
  }

  .b3a .sep {
    margin: 0 3px;
  }

  .b3a .tool + .tool {
    margin-left: 4px;
  }

  .b3a .grip {
    margin-right: -1px;
  }

  .b3b {
    margin-left: 80px;
    width: 416px;
    padding-left: 3px;
  }

  .b3b .grip {
    margin-right: -10px;
  }

  .b4 {
    margin-left: 1px;
    width: 487px;
    padding-left: 3px;
  }

  .b4 .combo {
    margin-left: -3px;
    margin-right: -3px;
  }

  .b4x {
    margin-left: 6px;
    width: 30px;
    padding-left: 2px;
    gap: 0;
  }

  .b4x .grip {
    margin-right: 0;
  }

  .blank-box {
    width: 24px;
    height: 24px;
    background: #fff;
  }

  .combo {
    height: 24px;
    flex: none;
    background: #fff;
    display: flex;
    align-items: center;
    box-sizing: border-box;
    padding-left: 2px;
    white-space: nowrap;
  }

  .combo span {
    flex: 1;
    padding-top: 2px;
  }

  .combo .caret {
    margin: 0 3px 0 0;
  }

  .canvas {
    width: 1196px;
    height: 506px;
    flex: none;
  }

  .dim-text {
    font: 14px "Liberation Sans", sans-serif;
    fill: #606060;
  }

  .ax {
    font: 12px "Liberation Mono", monospace;
  }

  .ax-z {
    fill: #0a84f0;
    font-size: 14px;
  }

  .ax-x {
    fill: #e01010;
    font-size: 15px;
  }

  .ax-y {
    fill: #10f010;
    font-size: 9px;
    font-weight: 700;
  }

  .bottom {
    height: 33px;
    padding-top: 2px;
    box-sizing: border-box;
    align-items: flex-start;
  }

  .bottom .band {
    height: 28px;
  }

  .bb1 {
    margin-left: 2px;
    width: 208px;
    padding-left: 2px;
  }

  .bb1 .on,
  .bb2 .on {
    padding: 3px;
  }

  .bb2 {
    margin-left: 2px;
    width: 263px;
    padding-left: 2px;
  }

  .bb2 .grip {
    margin-right: -2px;
  }

  .bb3 {
    margin-left: 2px;
    width: 410px;
    padding-left: 3px;
    gap: 2px;
  }

  .bb3 .grip {
    margin-right: 0;
  }

  .bb3 .sep {
    margin: 0 0 0 3px;
  }

  .gray {
    color: #707070;
    font-size: 13px;
    white-space: nowrap;
  }

  .x {
    margin-right: 1px;
  }

  .y {
    margin-left: 3px;
  }

  .deg {
    margin-left: 2px;
  }

  .spin {
    height: 23px;
    box-sizing: border-box;
    border: 1px solid #707070;
    display: flex;
    align-items: center;
    background: #f0f0f0;
    font-size: 13px;
    color: #7c8a98;
    flex: none;
  }

  .val {
    flex: 1;
    text-align: right;
    padding-right: 3px;
  }

  .arrows {
    width: 16px;
    flex: none;
    display: flex;
    flex-direction: column;
    align-items: center;
    gap: 7px;
  }

  .up {
    border: 3px solid transparent;
    border-bottom: 4px solid #444;
    border-top: 0;
    width: 0;
  }

  .dn {
    border: 3px solid transparent;
    border-top: 4px solid #444;
    border-bottom: 0;
    width: 0;
  }

  .check {
    width: 11px;
    height: 11px;
    border: 1px solid #777;
    background: #f4f4f4;
    flex: none;
  }

  .rot-label {
    margin: 0 2px 0 5px;
    white-space: nowrap;
    flex: none;
    padding-top: 2px;
  }

  .status {
    height: 21px;
    flex: none;
    display: flex;
    gap: 3px;
    padding-top: 1px;
    box-sizing: border-box;
    background: #f0f0f0;
  }

  .cell {
    height: 19px;
    flex: none;
    box-sizing: border-box;
    border: 1px solid #dcdcdc;
    background: linear-gradient(#f4f4f4, #fdfdfd);
    line-height: 18px;
    padding-left: 1px;
    white-space: nowrap;
    overflow: hidden;
  }

  .cell .key {
    line-height: 18px;
  }

  .taskbar {
    height: 40px;
    flex: none;
    display: flex;
    align-items: stretch;
    background: #061018;
    color: #fff;
  }

  .win {
    width: 48px;
    flex: none;
    background: #000;
    display: flex;
    align-items: center;
    justify-content: center;
  }

  .search {
    width: 344px;
    flex: none;
    background: #333;
    display: flex;
    align-items: center;
    padding: 0 14px 0 10px;
    box-sizing: border-box;
  }

  .search-text {
    margin-left: 7px;
    font-size: 14px;
    color: #a0a0a0;
    flex: 1;
  }

  .apps {
    display: flex;
    padding-left: 1px;
  }

  .app-slot {
    width: 49px;
    display: flex;
    align-items: center;
    justify-content: center;
    box-sizing: border-box;
  }

  .app-slot svg {
    overflow: visible;
  }

  .first-slot {
    width: 48px;
  }

  .shift-a {
    margin-left: 4px;
  }

  .shift-b {
    margin-left: 5px;
  }

  .run {
    background: linear-gradient(#7ab8f0, #7ab8f0) center bottom / 39px 2px no-repeat;
  }

  .active {
    background: linear-gradient(#7ab8f0, #7ab8f0) center bottom / 100% 2px no-repeat, #2f3a40;
  }

  .tb-e {
    font: 26px "Liberation Sans", sans-serif;
  }

  .tb-e.strong {
    font-weight: 700;
    font-size: 30px;
  }

  .green-e {
    width: 24px;
    height: 26px;
    border-radius: 50%;
    background: #70c040;
    color: #fff;
    text-align: center;
    font: 700 22px/24px "Liberation Sans", sans-serif;
  }

  .blue-g {
    color: #1a7fe8;
    font: italic 700 30px/30px "Liberation Sans", sans-serif;
  }

  .tray {
    margin-left: 109px;
    display: flex;
    align-items: center;
    gap: 9px;
    color: #ddd;
  }

  .link {
    margin-right: 3px;
  }

  .wifi {
    margin-left: -2px;
  }

  .vol {
    margin-left: -6px;
  }

  .tray-a {
    font: 24px/24px "Liberation Sans", sans-serif;
    color: #fff;
  }

  .tray-s {
    width: 15px;
    height: 18px;
    margin-left: 4px;
    background: #f0531c;
    border-radius: 3px;
    color: #fff;
    text-align: center;
    font: italic 700 14px/18px "Liberation Sans", sans-serif;
  }

  .clock {
    width: 62px;
    margin-left: 16px;
    display: flex;
    flex-direction: column;
    align-items: center;
    justify-content: center;
    font-size: 13px;
    color: #e8e8e8;
  }

  .notify {
    margin-left: auto;
    width: 54px;
    display: flex;
    align-items: center;
    justify-content: center;
  }
</style>
